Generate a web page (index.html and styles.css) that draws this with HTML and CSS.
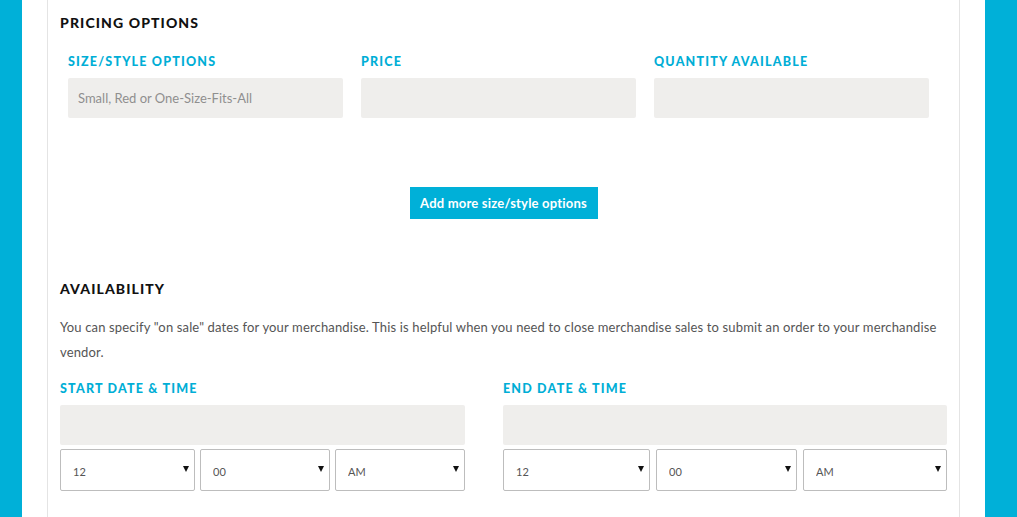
FILE: index.html
```html
<!DOCTYPE html>
<html>
<head>
<meta charset="utf-8">
<link rel="stylesheet" href="styles.css">
</head>
<body>
<div class="page">
  <div class="panel">
    <section class="pricing">
      <h2 class="heading">PRICING OPTIONS</h2>
      <div class="price-grid">
        <div class="field">
          <label class="label">SIZE/STYLE OPTIONS</label>
          <input class="input" type="text" placeholder="Small, Red or One-Size-Fits-All">
        </div>
        <div class="field">
          <label class="label">PRICE</label>
          <input class="input" type="text">
        </div>
        <div class="field">
          <label class="label">QUANTITY AVAILABLE</label>
          <input class="input" type="text">
        </div>
      </div>
      <div class="btn-row">
        <button class="btn">Add more size/style options</button>
      </div>
    </section>
    <section class="availability">
      <h2 class="heading">AVAILABILITY</h2>
      <p class="desc">You can specify "on sale" dates for your merchandise. This is helpful when you need to close merchandise sales to submit an order to your merchandise vendor.</p>
      <div class="date-grid">
        <div class="date-col">
          <label class="label">START DATE &amp; TIME</label>
          <input class="input date-input" type="text">
          <div class="time-row start">
            <div class="sel"><select><option>12</option></select></div>
            <div class="sel"><select><option>00</option></select></div>
            <div class="sel"><select><option>AM</option></select></div>
          </div>
        </div>
        <div class="date-col">
          <label class="label">END DATE &amp; TIME</label>
          <input class="input date-input" type="text">
          <div class="time-row end">
            <div class="sel"><select><option>12</option></select></div>
            <div class="sel"><select><option>00</option></select></div>
            <div class="sel"><select><option>AM</option></select></div>
          </div>
        </div>
      </div>
    </section>
  </div>
</div>
</body>
</html>
```
FILE: styles.css
```css
html, body {
  margin: 0;
  padding: 0;
  height: 100%;
}
body {
  background: #00b0d8;
  font-family: "Lato", "Open Sans", Arial, sans-serif;
  overflow: hidden;
}
.page {
  margin: 0 32px 0 22px;
  background: #fff;
  height: 517px;
  padding: 0 25px;
}
.panel {
  border-left: 1px solid #e4e4e4;
  border-right: 1px solid #e4e4e4;
  height: 100%;
  padding: 0 12px;
  box-sizing: border-box;
}
.heading {
  margin: 0;
  font-family: "Lato", sans-serif;
  font-weight: 900;
  font-size: 14px;
  letter-spacing: 1.1px;
  color: #111;
  line-height: 18px;
}
.pricing .heading {
  padding-top: 14px;
}
.price-grid {
  display: grid;
  grid-template-columns: repeat(3, 275px);
  column-gap: 18px;
  padding: 0 8px;
  margin-top: 23px;
}
.field {
  display: flex;
  flex-direction: column;
}
.label {
  font-family: "Lato", sans-serif;
  font-weight: 900;
  font-size: 12.5px;
  letter-spacing: 1.2px;
  color: #00aed6;
  line-height: 14px;
  display: block;
}
.input {
  height: 40px;
  border: 0;
  background: #efeeec;
  border-radius: 2px;
  margin-top: 9px;
  padding: 0 10px;
  box-sizing: border-box;
  font-family: "Lato", sans-serif;
  font-size: 13px;
  color: #555;
  outline: none;
}
.input::placeholder {
  color: #8f8f8f;
}
.btn-row {
  display: flex;
  justify-content: center;
  margin-top: 69px;
}
.btn {
  background: #00b0d8;
  color: #fff;
  border: 0;
  height: 32px;
  width: 188px;
  font-family: "Lato", sans-serif;
  font-weight: 700;
  font-size: 13px;
  letter-spacing: 0.2px;
  padding: 0;
}
.availability .heading {
  margin-top: 61px;
}
.desc {
  margin: 17px 0 0;
  font-size: 13px;
  letter-spacing: 0.15px;
  line-height: 25px;
  color: #555;
  font-family: "Lato", sans-serif;
}
.date-grid {
  display: grid;
  grid-template-columns: 405px 444px;
  column-gap: 38px;
  margin-top: 17px;
}
.date-col {
  display: flex;
  flex-direction: column;
}
.date-input {
  margin-top: 9px;
}
.time-row {
  display: grid;
  margin-top: 4px;
}
.time-row.start {
  grid-template-columns: 135px 130px 130px;
  column-gap: 5px;
}
.time-row.end {
  grid-template-columns: 147px 141px 144px;
  column-gap: 6px;
}
.sel {
  position: relative;
}
.sel select {
  appearance: none;
  -webkit-appearance: none;
  width: 100%;
  height: 42px;
  border: 1px solid #bdbdbd;
  border-radius: 2px;
  background: #fff;
  padding: 2px 12px 0;
  font-family: "Lato", sans-serif;
  font-size: 11px;
  color: #555;
  box-sizing: border-box;
  outline: none;
}
.sel::after {
  content: "";
  position: absolute;
  right: 6px;
  top: 17px;
  border-left: 3px solid transparent;
  border-right: 3px solid transparent;
  border-top: 6px solid #111;
  pointer-events: none;
}
```
